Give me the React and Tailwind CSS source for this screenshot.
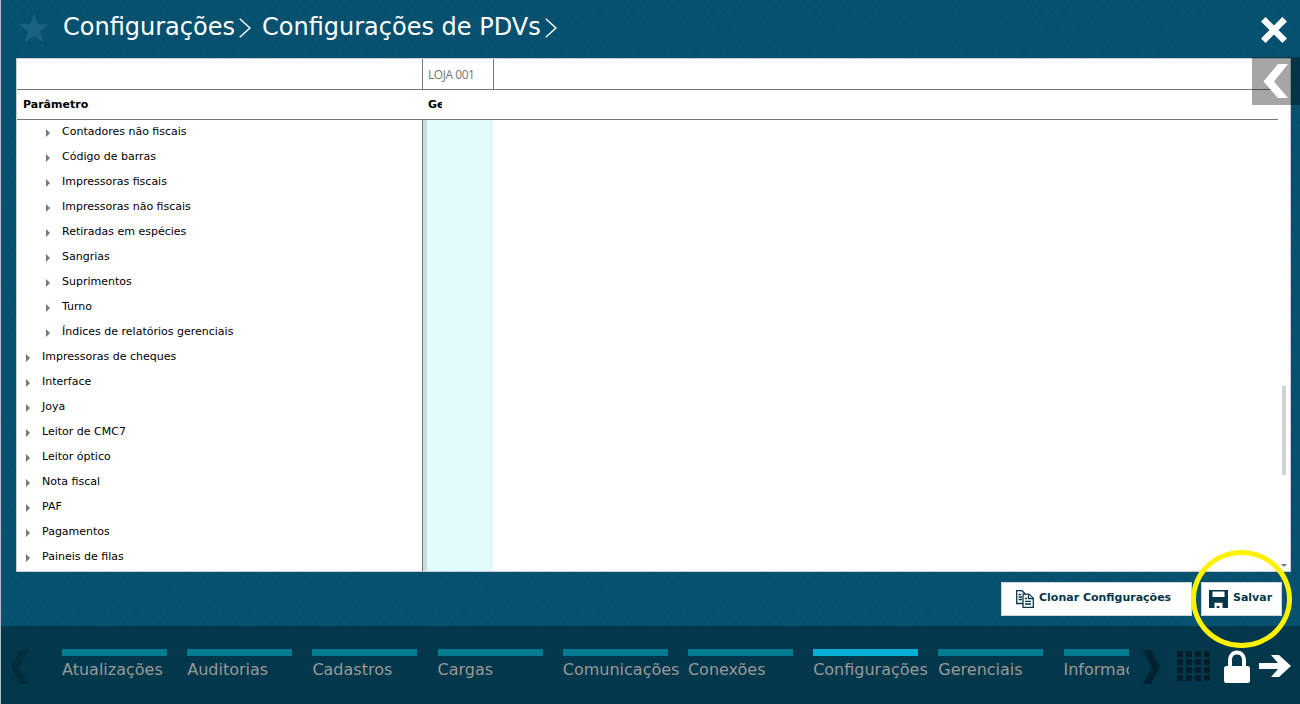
const groups = [
  { label: 'Contadores não fiscais', level: 2, spacing: 'tracking-[-0.02px]' },
  { label: 'Código de barras', level: 2 },
  { label: 'Impressoras fiscais', level: 2 },
  { label: 'Impressoras não fiscais', level: 2 },
  { label: 'Retiradas em espécies', level: 2 },
  { label: 'Sangrias', level: 2 },
  { label: 'Suprimentos', level: 2 },
  { label: 'Turno', level: 2 },
  { label: 'Índices de relatórios gerenciais', level: 2 },
  { label: 'Impressoras de cheques', level: 1 },
  { label: 'Interface', level: 1 },
  { label: 'Joya', level: 1 },
  { label: 'Leitor de CMC7', level: 1 },
  { label: 'Leitor óptico', level: 1 },
  { label: 'Nota fiscal', level: 1 },
  { label: 'PAF', level: 1 },
  { label: 'Pagamentos', level: 1 },
  { label: 'Paineis de filas', level: 1 },
]

const tabs = [
  { label: 'Atualizações' },
  { label: 'Auditorias' },
  { label: 'Cadastros' },
  { label: 'Cargas' },
  { label: 'Comunicações' },
  { label: 'Conexões' },
  { label: 'Configurações', active: true },
  { label: 'Gerenciais' },
  { label: 'Informações' },
]

function TitleChevron({ className = '' }) {
  return (
    <svg viewBox="0 0 12 20" className={`w-3 h-5 shrink-0 ${className}`} fill="none" stroke="white" strokeWidth="1.4">
      <path d="M0.7 0.7 11 10 0.7 19.3" />
    </svg>
  )
}

function Header() {
  return (
    <header className="h-[58px] shrink-0 flex items-start pl-[18px] pr-[13px] text-white">
      <svg viewBox="0 0 30 30" className="w-[30px] h-[30px] mt-[13px] fill-[#1b6280]">
        <path d="M15 0 18.6 11.3H30L20.8 18.4 24.3 29.6 15 22.8 5.7 29.6 9.2 18.4 0 11.3H11.4Z" />
      </svg>
      <h1 className="flex items-start ml-[14px] text-2xl leading-[32px] pt-[11px] whitespace-nowrap">
        <span className="w-[176px]">Configurações</span>
        <TitleChevron className="mt-[7px]" />
        <span className="w-[294px] pl-[11px]">Configurações de PDVs</span>
        <TitleChevron className="mt-[7px]" />
      </h1>
      <svg viewBox="0 0 26 26" className="w-[26px] h-[26px] ml-auto mt-[17px]" stroke="white" strokeWidth="6.5">
        <path d="M2.3 2.3 23.7 23.7M23.7 2.3 2.3 23.7" />
      </svg>
    </header>
  )
}

function TreeRow({ label, level }) {
  return (
    <li className={`h-[25px] flex items-center ${level === 2 ? 'pl-[29px]' : 'pl-[9px]'}`}>
      <svg viewBox="0 0 4 8" className="w-1 h-2 mr-3 shrink-0 fill-[#777]">
        <path d="M0 0 4 4 0 8Z" />
      </svg>
      <span>{label}</span>
    </li>
  )
}

function ParameterTable() {
  return (
    <main className="relative h-[514px] w-[1275px] ml-[15px] shrink-0 bg-white border border-[#c9cdd0] text-[11px] text-black flex flex-col">
      <div className="flex h-[30px] w-[1261px] border-b border-[#777] box-content shrink-0">
        <div className="w-[405px]" />
        <div className="w-[72px] border-x border-[#777] pl-[5px] pt-[8px] font-['Open_Sans',sans-serif] text-xs leading-4 tracking-[-0.45px] text-[#777]">
          LOJA 001
        </div>
      </div>
      <div className="flex h-[29px] w-[1261px] border-b border-[#777] box-content shrink-0 font-bold leading-[29px]">
        <div className="w-[405px] pl-[6px]">Parâmetro</div>
        <div className="w-[20px] ml-[6px] pr-[5px]">
          <div className="overflow-hidden w-[14px]">Geral</div>
        </div>
      </div>
      <div className="flex flex-1 min-h-0">
        <ul className="w-[405px]">
          {groups.map((g) => <TreeRow key={g.label} {...g} />)}
        </ul>
        <div className="w-[71px] bg-[#e3fafd] border-l border-[#777]">
          <div className="w-1 h-full bg-[#c9dddd]" />
        </div>
      </div>

      <div className="absolute right-[4px] top-[327px] w-1 h-[89px] bg-[#d3d1d1]" />
      <svg viewBox="0 0 6 3" className="absolute right-[3px] bottom-[4px] w-[6px] h-[3px] fill-[#777]">
        <path d="M0 0H6L3 3Z" />
      </svg>
      <button className="absolute -right-[10px] -top-[2px] w-[48px] h-[48px] bg-black/35">
        <svg viewBox="0 0 48 48" className="w-12 h-12 fill-white">
          <path d="M26 7H36L22 24.5 36 41H26L11.5 24.5Z" />
        </svg>
      </button>
    </main>
  )
}

function CopyIcon() {
  return (
    <svg viewBox="0 0 18 18" className="w-[18px] h-[18px]" fill="white" stroke="#05364a" strokeWidth="1.3">
      <path d="M.7.7H6L9 3.7V13.5H.7Z" />
      <path d="M2.5 4.5H5M2.5 7H6M2.5 9.5H6" />
      <path d="M7 4.2H13L17.3 8.2V17.3H7Z" />
      <path d="M12.5 4.5V8.5H17M9 8.5H11M9 11.3H15M9 14H15" />
    </svg>
  )
}

function SaveIcon() {
  return (
    <svg viewBox="0 0 19 18" className="w-[19px] h-[18px]">
      <path fill="#05364a" d="M0 0H19V18H13.5V12.7H5.5V18H0Z" />
      <path fill="white" d="M3.5 1.5H15.5V7H3.5Z" />
      <path fill="#05364a" d="M7.7 16H10.3V18H7.7Z" />
    </svg>
  )
}

function Actions() {
  return (
    <div className="relative h-[54px] shrink-0 flex gap-[9px] pt-[10px] pl-[1000px] text-[11px] font-bold text-[#05364a]">
      <button className="w-[191px] h-[34px] bg-white border border-[#c9d6dc] flex items-center pl-[14px] gap-[5px] whitespace-nowrap">
        <CopyIcon />
        <span className="pb-[2px]">Clonar Configurações</span>
      </button>
      <button className="w-[81px] h-[34px] bg-white border border-[#c9d6dc] flex items-center pl-[7px] gap-[5px]">
        <SaveIcon />
        <span className="pb-[2px]">Salvar</span>
      </button>
      <div className="absolute left-[1190px] -top-[22px] w-[101px] h-[98px] rounded-[50%] border-[5px] border-[#fff200] z-10" />
    </div>
  )
}

function TabBar() {
  return (
    <footer className="flex-1 bg-[#03374b] flex items-start pt-[22px]">
      <svg viewBox="0 0 17 34" className="w-[17px] h-[34px] ml-[10px] mt-[2px] fill-[#032c3c]">
        <path d="M9 0H17L8 17 17 34H9L0 17Z" />
      </svg>
      <nav className="ml-[34px] w-[1067px] pt-px flex gap-[20.2px] overflow-hidden text-[#999]">
        {tabs.map((tab) => (
          <a key={tab.label} className="w-[105px] shrink-0 text-base leading-5 whitespace-nowrap">
            <div className={`h-[7px] mb-1 ${tab.active ? 'bg-[#00add3]' : 'bg-[#007b92]'}`} />
            {tab.label}
          </a>
        ))}
      </nav>
      <svg viewBox="0 0 17 34" className="w-[17px] h-[34px] ml-[14px] mt-[2px] fill-[#02222f]">
        <path d="M0 0H8L17 17 8 34H0L9 17Z" />
      </svg>
      <div className="grid grid-cols-4 gap-x-[3px] gap-y-[2px] ml-[17px] mt-[3px]">
        {Array.from({ length: 16 }, (_, i) => <i key={i} className="w-[6px] h-[6px] bg-[#021d28]" />)}
      </div>
      <svg viewBox="0 0 26 33" className="w-[26px] h-[33px] ml-[14px] mt-[2px]">
        <path fill="none" stroke="white" strokeWidth="4" d="M6 17V10C6 0 20 0 20 10V17" />
        <rect y="16" width="26" height="17" rx="2.5" fill="white" />
      </svg>
      <svg viewBox="0 0 32 22" className="w-8 h-[22px] ml-[9px] mt-[7px] fill-white">
        <path d="M0 8H19L12 0H20L32 11 20 22H12L19 14H0Z" />
      </svg>
    </footer>
  )
}

export default function App() {
  return (
    <div className="w-[1300px] h-[704px] overflow-hidden flex flex-col border-l border-[#b5bdc1] bg-[#075270] bg-[repeating-linear-gradient(45deg,#03405830_0_1px,transparent_1px_8px),repeating-linear-gradient(-45deg,#03405830_0_1px,transparent_1px_8px)] font-['DejaVu_Sans',sans-serif]">
      <Header />
      <ParameterTable />
      <Actions />
      <TabBar />
    </div>
  )
}
